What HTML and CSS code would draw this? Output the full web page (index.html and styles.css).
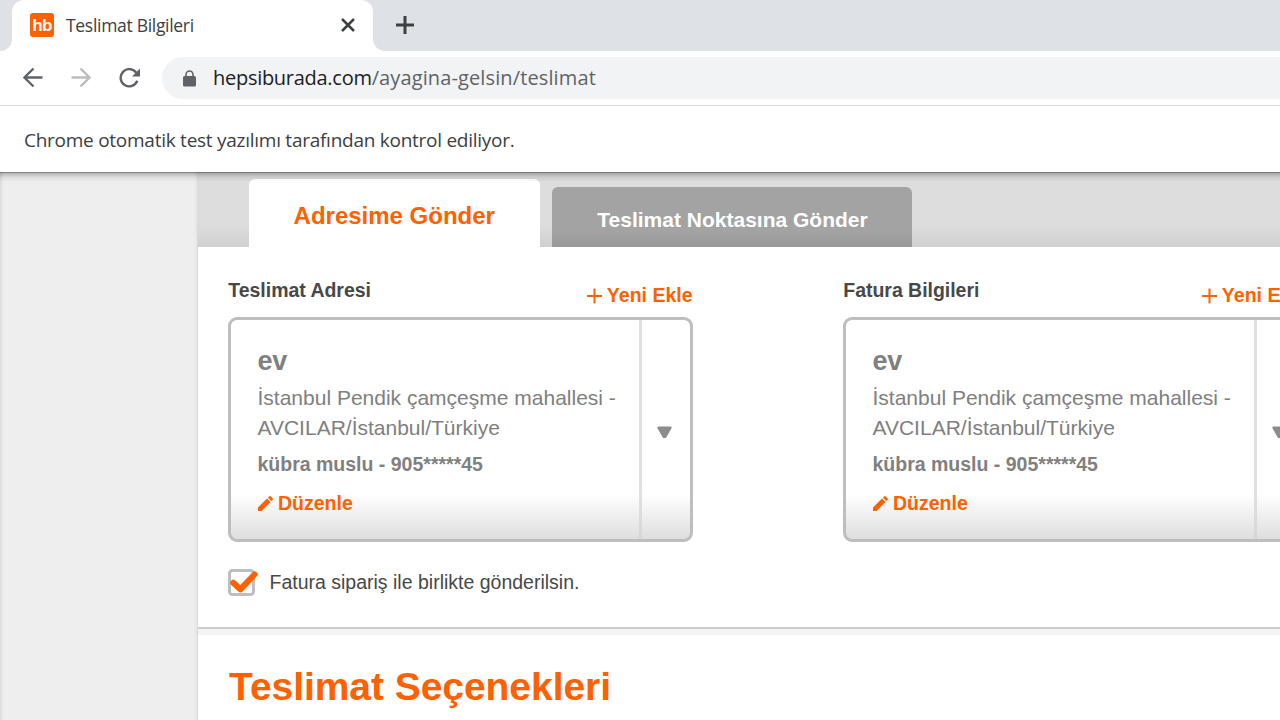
FILE: index.html
```html
<!DOCTYPE html>
<html lang="tr">
<head>
<meta charset="utf-8">
<title>Teslimat Bilgileri</title>
<link rel="stylesheet" href="styles.css">
</head>
<body>
<header class="browser">
  <div class="tabstrip">
    <div class="prev-tab"></div>
    <div class="tab">
      <span class="favicon">hb</span>
      <span class="tab-title">Teslimat Bilgileri</span>
      <svg class="tab-close" width="14" height="14" viewBox="0 0 14 14"><path d="M1 1l12 12M13 1L1 13" stroke="#3c4043" stroke-width="2.500" fill="none"/></svg>
    </div>
    <div class="strip-rest">
      <svg width="18" height="18" viewBox="0 0 18 18"><path d="M9 0v18M0 9h18" stroke="#3c4043" stroke-width="3" fill="none"/></svg>
    </div>
  </div>
  <div class="toolbar">
    <svg class="nav" width="20" height="20" viewBox="0 0 20 20"><path d="M19.500 9.500H2M10.500 .5l-9 9 9 9" stroke="#5f6368" stroke-width="2.300" fill="none"/></svg>
    <svg class="nav" width="20" height="20" viewBox="0 0 20 20"><path d="M.5 9.500H18M9.500 .5l9 9-9 9" stroke="#babcbe" stroke-width="2.300" fill="none"/></svg>
    <svg class="nav" width="22" height="20" viewBox="0 0 22 20"><path d="M18.300 12.800A8.600 8.600 0 1 1 17.300 4.800" stroke="#5f6368" stroke-width="2.400" fill="none"/><path d="M21 .5v8h-8z" fill="#5f6368"/></svg>
    <div class="omnibox">
      <svg class="lock" width="13" height="17" viewBox="0 0 13 17"><rect x="0" y="6" width="13" height="10.500" rx="1.500" fill="#5f6368"/><path d="M3 7V4.500a3.500 3.500 0 0 1 7 0V7" stroke="#5f6368" stroke-width="1.600" fill="none"/></svg>
      <span class="url"><span class="host">hepsiburada.com</span><span class="path">/ayagina-gelsin/teslimat</span></span>
    </div>
  </div>
  <div class="infobar"><span class="info-text">Chrome otomatik test yazılımı tarafından kontrol ediliyor.</span></div>
</header>
<main class="viewport">
  <aside class="gutter"></aside>
  <div class="page">
    <nav class="tabs">
      <div class="mode mode-active">Adresime Gönder</div>
      <div class="mode mode-idle">Teslimat Noktasına Gönder</div>
    </nav>
    <section class="addresses">
      <div class="columns">
        <div class="column">
          <div class="column-head">
            <h2 class="label">Teslimat Adresi</h2>
            <a class="add"><svg width="15" height="16" viewBox="0 0 15 16"><path d="M7.500 .5v15M0 8h15" stroke="#ff6000" stroke-width="2" fill="none"/></svg>Yeni Ekle</a>
          </div>
          <div class="card">
            <div class="card-body">
              <div class="name">ev</div>
              <div class="street">İstanbul Pendik çamçeşme mahallesi -<br>AVCILAR/İstanbul/Türkiye</div>
              <div class="person">kübra muslu - 905*****45</div>
              <a class="edit"><svg width="15" height="15" viewBox="0 0 15 15"><path d="M0 15v-3.500L9 2.500l3.500 3.500L3.500 15zM10 1.700l1.300-1.400q.6-.6 1.200 0l2.200 2.200q.6.600 0 1.200L13.300 5z" fill="#ff6000"/></svg>Düzenle</a>
            </div>
            <div class="card-toggle"><svg width="15" height="13" viewBox="0 0 15 13"><path d="M1.500 1.700h12L8.200 10.800h-1.400z" fill="#8c8c8c" stroke="#8c8c8c" stroke-width="2.400" stroke-linejoin="round"/></svg></div>
          </div>
        </div>
        <div class="column">
          <div class="column-head">
            <h2 class="label">Fatura Bilgileri</h2>
            <a class="add"><svg width="15" height="16" viewBox="0 0 15 16"><path d="M7.500 .5v15M0 8h15" stroke="#ff6000" stroke-width="2" fill="none"/></svg>Yeni Ekle</a>
          </div>
          <div class="card">
            <div class="card-body">
              <div class="name">ev</div>
              <div class="street">İstanbul Pendik çamçeşme mahallesi -<br>AVCILAR/İstanbul/Türkiye</div>
              <div class="person">kübra muslu - 905*****45</div>
              <a class="edit"><svg width="15" height="15" viewBox="0 0 15 15"><path d="M0 15v-3.500L9 2.500l3.500 3.500L3.500 15zM10 1.700l1.300-1.400q.6-.6 1.200 0l2.200 2.200q.6.600 0 1.200L13.300 5z" fill="#ff6000"/></svg>Düzenle</a>
            </div>
            <div class="card-toggle"><svg width="15" height="13" viewBox="0 0 15 13"><path d="M1.500 1.700h12L8.200 10.800h-1.400z" fill="#8c8c8c" stroke="#8c8c8c" stroke-width="2.400" stroke-linejoin="round"/></svg></div>
          </div>
        </div>
      </div>
      <div class="check-row">
        <svg class="check" width="30" height="28" viewBox="0 0 30 28"><rect x="1.500" y="1.500" width="24" height="24" rx="3" fill="#fff" stroke="#bebebe" stroke-width="3"/><path d="M5.300 13.800L12.300 20.300 26.500 5.500" stroke="#ff6000" stroke-width="6" stroke-linecap="round" stroke-linejoin="round" fill="none"/></svg>
        <span class="check-text">Fatura sipariş ile birlikte gönderilsin.</span>
      </div>
    </section>
    <section class="options"><h1 class="title">Teslimat Seçenekleri</h1></section>
  </div>
</main>
</body>
</html>
```
FILE: styles.css
```css
* { box-sizing: border-box; }
body { margin: 0; width: 1280px; height: 720px; overflow: hidden; background: #fff; font-family: "Liberation Sans", Arial, sans-serif; }
svg { display: block; flex: none; }
h1, h2 { margin: 0; }

.browser { font-family: "Open Sans", "Noto Sans", sans-serif; }
.tabstrip { display: flex; height: 51px; background: #fff; }
.prev-tab { width: 12px; background: #dee1e6; border-bottom-right-radius: 12px; }
.tab { display: flex; align-items: center; width: 360.5px; padding: 0 18px; background: linear-gradient(#dee1e6 0 14px, #fff 14px); position: relative; isolation: isolate; }
.tab::before { content: ""; position: absolute; inset: 0; z-index: -1; background: #fff; border-radius: 12px 12px 0 0; }
.favicon { width: 24px; height: 24px; margin-top: -1px; border-radius: 3px; background: #ff6000; color: #fff; font: bold 17px/25px "Liberation Sans", Arial, sans-serif; letter-spacing: -0.6px; text-align: center; }
.tab-title { margin: -2px 0 0 12px; flex: 1; font-size: 17.5px; line-height: 24px; letter-spacing: -0.3px; color: #3c4043; white-space: nowrap; }
.tab-close { margin: -1px -0.5px 0 0; }
.strip-rest { flex: 1; padding: 16px 0 0 23.5px; background: #dee1e6; border-bottom-left-radius: 12px; }
.toolbar { display: flex; align-items: center; height: 55px; padding-left: 23px; gap: 28px; border-bottom: 1px solid #dadce0; }
.omnibox { display: flex; align-items: center; flex: 1; height: 42px; margin-left: -7px; padding-left: 20.5px; border-radius: 21px 0 0 21px; background: #f1f3f4; }
.url { margin: -1px 0 0 17.5px; font-size: 20px; letter-spacing: -0.28px; white-space: nowrap; color: #5f6368; }
.host { color: #202124; }
.path { letter-spacing: 0.12px; }
.infobar { display: flex; align-items: center; height: 66px; padding: 2px 0 0 24px; font-size: 19px; letter-spacing: -0.26px; white-space: nowrap; color: #3c4043; }

.viewport { display: flex; height: 548px; position: relative; }
.viewport::after { content: ""; position: absolute; top: 0; left: 0; right: 0; height: 10px; background: linear-gradient(rgba(0,0,0,.45) 0 1px, rgba(0,0,0,.25) 1px, rgba(0,0,0,.08) 5px, transparent); }
.gutter { width: 198px; background: linear-gradient(90deg, #dcdcdc, #eee 4px, #eee 194px, #e4e4e4); border-right: 1px solid #dcdcdc; }
.page { width: 1082px; overflow: hidden; }
.tabs { display: flex; align-items: flex-end; gap: 12px; height: 75px; padding-left: 51px; background: linear-gradient(#ddd 52px, #d0d0d0 75px); }
.mode { text-align: center; font-weight: bold; border-radius: 6px 6px 0 0; white-space: nowrap; }
.mode-active { width: 291px; height: 68px; padding-right: 0.5px; background: #fff; color: #ff6000; font-size: 24px; line-height: 74px; }
.mode-idle { width: 360px; height: 60px; padding-left: 1px; background: linear-gradient(#a3a3a3 45px, #989898); color: #fff; font-size: 21px; line-height: 66px; }
.addresses { height: 382px; padding: 0 0 0 30px; border-bottom: 2px solid #ccc; }
.columns { display: flex; gap: 150px; width: 1080px; }
.column { width: 465px; flex: none; }
.column-head { display: flex; justify-content: space-between; height: 70px; padding: 32px .5px 0 0; }
.label { padding-left: 0.3px; font-size: 19.5px; line-height: 22px; letter-spacing: -0.03px; color: #484848; }
.add { display: flex; gap: 5px; align-items: center; height: 22px; margin-top: 5px; color: #ff6000; font-weight: bold; font-size: 19.5px; white-space: nowrap; }
.add svg { margin-top: 1px; }
.card { display: flex; height: 225px; border: 3px solid #bebebe; border-radius: 9px; background: linear-gradient(#fff 174px, #dedede); }
.card-body { width: 411px; padding: 25px 0 0 26.5px; border-style: solid; border-width: 0 3px 0 0; border-image: linear-gradient(#e0e0e0 174px, #d6d6d6) 1; color: #808080; white-space: nowrap; }
.name { font-size: 27px; line-height: 32px; letter-spacing: -0.3px; font-weight: bold; }
.street { margin-top: 6px; font-size: 21px; line-height: 30px; }
.person { margin-top: 9px; font-size: 19.5px; line-height: 24px; font-weight: bold; }
.edit { display: flex; align-items: center; gap: 5.5px; margin-top: 15px; height: 24px; color: #ff6000; font-size: 19.5px; font-weight: bold; }
.card-toggle { flex: 1; display: flex; align-items: center; justify-content: center; padding: 6px 3px 0 0; }
.check-row { display: flex; align-items: center; height: 28px; margin-top: 27px; gap: 11.5px; }
.check-text { font-size: 19.5px; line-height: 22px; color: #484848; margin-top: -2px; }
.options { border-top: 6px solid #f4f4f4; padding: 29px 0 0 31px; }
.title { font-size: 39px; line-height: 46px; letter-spacing: -0.05px; color: #ff6000; white-space: nowrap; }
```
